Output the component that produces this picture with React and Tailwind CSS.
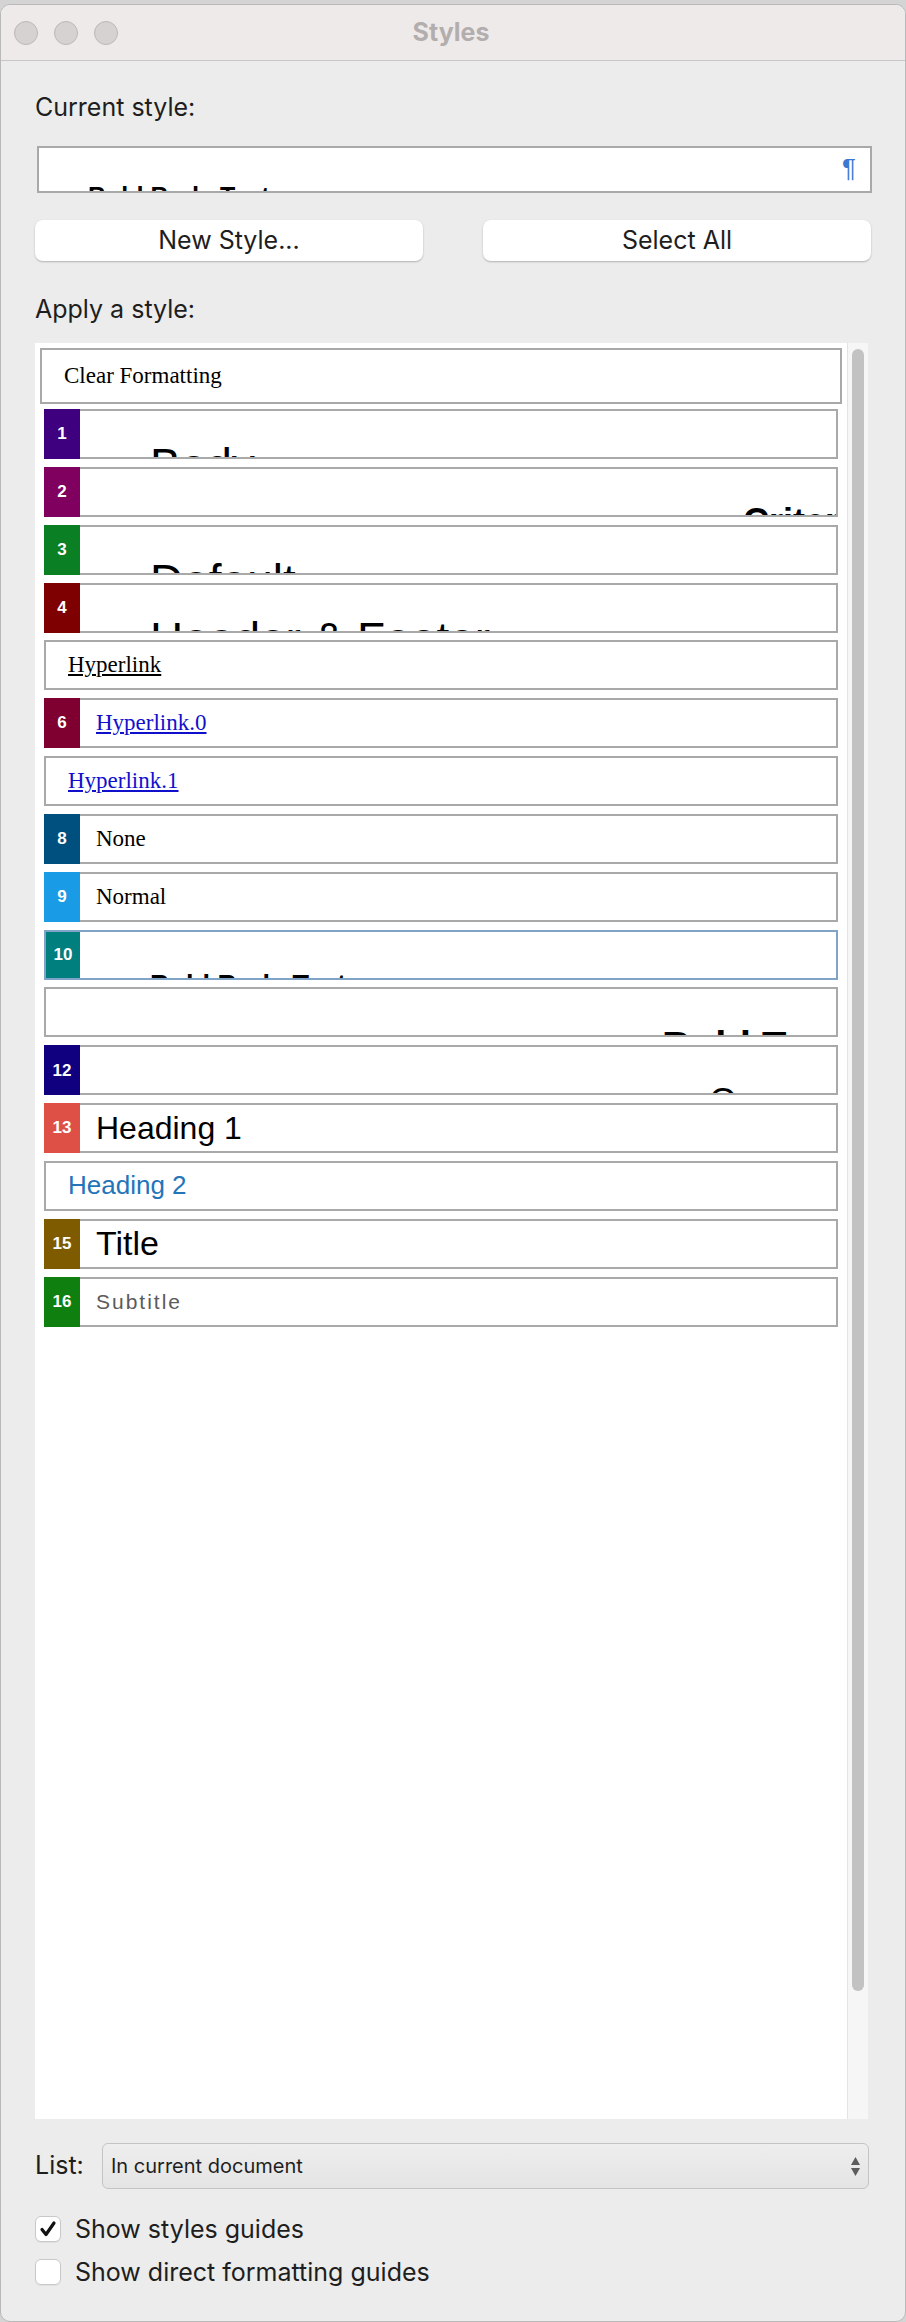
import React from "react";

const ui = "font-['Inter','Liberation_Sans',sans-serif]";
const serif = "font-['Liberation_Serif',serif]";
const sans = "font-['Liberation_Sans',sans-serif]";

// style list rows, top to bottom
const rows = [
  { num: "1", tab: "bg-[#3f0080]", text: "Body", cls: `${sans} text-[46px] leading-none`, box: "items-start pl-[70px] pt-[31px]" },
  { num: "2", tab: "bg-[#7f005f]", text: "Criteria", cls: `${sans} font-bold text-[36px] leading-none`, box: "items-start pl-[663px] pt-[35px]" },
  { num: "3", tab: "bg-[#0b7f23]", text: "Default", cls: `${sans} text-[46px] leading-none`, box: "items-start pl-[70px] pt-[31px]" },
  { num: "4", tab: "bg-[#7f0000]", text: "Header & Footer", cls: `${sans} text-[46px] leading-none`, box: "items-start pl-[70px] pt-[31px]" },
  { text: "Hyperlink", cls: `${serif} text-[23px] underline text-black`, box: "items-center pl-[22px]" },
  { num: "6", tab: "bg-[#7f0030]", text: "Hyperlink.0", cls: `${serif} text-[23px] underline text-[#1010cc]`, box: "items-center pl-[16px]" },
  { text: "Hyperlink.1", cls: `${serif} text-[23px] underline text-[#1010cc]`, box: "items-center pl-[22px]" },
  { num: "8", tab: "bg-[#00507f]", text: "None", cls: `${serif} text-[23px]`, box: "items-center pl-[16px]" },
  { num: "9", tab: "bg-[#1a9be6]", text: "Normal", cls: `${serif} text-[23px]`, box: "items-center pl-[16px]" },
  { num: "10", tab: "bg-[#007f7f]", text: "Bold Body Text", cls: `${sans} font-bold text-[27px] leading-none`, box: "items-start pl-[70px] pt-[40px]", selected: true },
  { text: "Bold Term", cls: `${sans} font-bold text-[40px] leading-none`, box: "items-start pl-[616px] pt-[37px]" },
  { num: "12", tab: "bg-[#10007f]", text: "One", cls: `${sans} text-[36px] leading-none`, box: "items-start pl-[629px] pt-[37px]" },
  { num: "13", tab: "bg-[#de5046]", text: "Heading 1", cls: `${sans} text-[32px]`, box: "items-center pl-[16px]" },
  { text: "Heading 2", cls: `${sans} text-[26px] text-[#2374b9]`, box: "items-center pl-[22px]" },
  { num: "15", tab: "bg-[#7f5b00]", text: "Title", cls: `${sans} text-[34px]`, box: "items-center pl-[16px]" },
  { num: "16", tab: "bg-[#0f8010]", text: "Subtitle", cls: `${sans} text-[21px] tracking-[2px] text-[#5b5b5b]`, box: "items-center pl-[16px]" },
];

function StyleRow({ row }) {
  const label = (
    <span className={`${row.cls} whitespace-nowrap`}>{row.text}</span>
  );

  if (!row.num) {
    return (
      <div className={`flex h-[50px] w-[794px] overflow-hidden border-2 border-[#a9a9a9] bg-white ${row.box}`}>
        {label}
      </div>
    );
  }

  if (row.selected) {
    return (
      <div className="flex h-[50px] w-[794px] overflow-hidden border-2 border-[#7fa4c8] bg-white">
        <div className={`flex w-[34px] shrink-0 items-center justify-center ${row.tab}`}>
          <span className={`${sans} text-[17px] font-bold text-white`}>{row.num}</span>
        </div>
        <div className={`flex flex-1 overflow-hidden ${row.box}`}>{label}</div>
      </div>
    );
  }

  return (
    <div className="flex h-[50px] w-[794px]">
      <div className={`flex w-[36px] shrink-0 items-center justify-center ${row.tab}`}>
        <span className={`${sans} text-[17px] font-bold text-white`}>{row.num}</span>
      </div>
      <div className={`flex flex-1 overflow-hidden border-2 border-l-0 border-[#a9a9a9] bg-white ${row.box}`}>
        {label}
      </div>
    </div>
  );
}

function Checkbox({ checked, label }) {
  return (
    <div className="flex h-[26px] items-center gap-[14px]">
      <div className="flex h-[26px] w-[26px] items-center justify-center rounded-[6px] border border-[#c9c9c9] bg-white shadow-[0_1px_1px_rgba(0,0,0,0.05)]">
        {checked && (
          <svg width="20" height="20" viewBox="0 0 20 20">
            <path d="M4 10.5 L8 15.5 L16 4" fill="none" stroke="#111" strokeWidth="3.2" strokeLinecap="round" strokeLinejoin="round" />
          </svg>
        )}
      </div>
      <span className="text-[25px] leading-[26px] text-[#1e1e1e]">{label}</span>
    </div>
  );
}

export default function App() {
  return (
    <div className={`w-[906px] h-[2322px] bg-[#d4d4d4] pt-[4px] ${ui}`}>
      <div className="flex h-[2318px] flex-col overflow-hidden rounded-[10px] border border-[#b9b9b9] bg-[#ececec]">
        {/* Title bar */}
        <div className="flex h-[56px] shrink-0 items-center border-b border-[#c9c6c6] bg-[#efeaea]">
          <div className="flex gap-[16px] pl-[13px]">
            <div className="h-[24px] w-[24px] rounded-full border border-[#bcb8b8] bg-[#d6d2d2]" />
            <div className="h-[24px] w-[24px] rounded-full border border-[#bcb8b8] bg-[#d6d2d2]" />
            <div className="h-[24px] w-[24px] rounded-full border border-[#bcb8b8] bg-[#d6d2d2]" />
          </div>
          <div className="flex-1 pr-[121px] text-center text-[25px] font-bold text-[#b3aeae]">Styles</div>
        </div>

        <div className="flex flex-col px-[34px]">
          <div className="pt-[31px] text-[25px] leading-[30px] text-[#1e1e1e]">Current style:</div>

          {/* Current style preview */}
          <div className="mt-[24px] ml-[2px] flex h-[47px] w-[835px] overflow-hidden border-2 border-[#a9a9a9] bg-white">
            <div className="flex-1 overflow-hidden pl-[49px] pt-[36px]">
              <span className={`${sans} whitespace-nowrap text-[25px] font-bold leading-none`}>Bold Body Text</span>
            </div>
            <div className={`${sans} pr-[14px] pt-[7px] text-[26px] leading-none text-[#3b78d0]`}>¶</div>
          </div>

          {/* Buttons */}
          <div className="mt-[27px] flex w-[836px] justify-between">
            <button className="h-[41px] w-[388px] rounded-[8px] bg-white text-[25px] text-[#1e1e1e] shadow-[0_1px_2px_rgba(0,0,0,0.25)]">
              New Style...
            </button>
            <button className="h-[41px] w-[388px] rounded-[8px] bg-white text-[25px] text-[#1e1e1e] shadow-[0_1px_2px_rgba(0,0,0,0.25)]">
              Select All
            </button>
          </div>

          <div className="mt-[33px] text-[25px] leading-[30px] text-[#1e1e1e]">Apply a style:</div>

          {/* Style list */}
          <div className="mt-[19px] flex h-[1776px] w-[833px] bg-white">
            <div className="flex w-[812px] flex-col pt-[5px]">
              <div className={`ml-[5px] flex h-[56px] w-[802px] items-center border-2 border-[#a9a9a9] pl-[22px] ${serif} text-[23px]`}>
                Clear Formatting
              </div>
              <div className="ml-[9px] mt-[5px] flex flex-col gap-[7.85px]">
                {rows.map((row, i) => (
                  <StyleRow key={i} row={row} />
                ))}
              </div>
            </div>
            <div className="flex w-[21px] justify-center border-l border-[#e3e3e3] bg-[#f6f6f6]">
              <div className="mt-[6px] h-[1642px] w-[12px] rounded-full bg-[#c2c2c2]" />
            </div>
          </div>

          {/* List select */}
          <div className="mt-[24px] flex items-center">
            <span className="w-[67px] text-[25px] text-[#1e1e1e]">List:</span>
            <div className="flex h-[46px] w-[767px] items-center justify-between rounded-[6px] border border-[#c4c4c4] bg-gradient-to-b from-[#eeeeee] to-[#e4e4e4] pl-[8px] pr-[8px]">
              <span className="text-[20px] text-[#1e1e1e]">In current document</span>
              <div className="flex flex-col items-center gap-[3px]">
                <svg width="9" height="8" viewBox="0 0 9 8"><path d="M4.5 0 L9 8 L0 8 Z" fill="#5c5c5c" /></svg>
                <svg width="9" height="8" viewBox="0 0 9 8"><path d="M0 0 L9 0 L4.5 8 Z" fill="#5c5c5c" /></svg>
              </div>
            </div>
          </div>

          {/* Checkboxes */}
          <div className="mt-[27px] flex flex-col gap-[17px]">
            <Checkbox checked label="Show styles guides" />
            <Checkbox label="Show direct formatting guides" />
          </div>
        </div>
      </div>
    </div>
  );
}
